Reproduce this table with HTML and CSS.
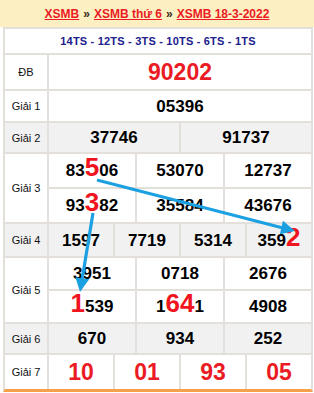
FILE: index.html
```html
<!DOCTYPE html>
<html lang="vi">
<head>
<meta charset="utf-8">
<title>XSMB 18-3-2022</title>
<link rel="stylesheet" href="styles.css">
</head>
<body>
<div class="page">
  <div class="head">
    <a href="#">XSMB</a> <span class="sep">»</span> <a href="#">XSMB thứ 6</a> <span class="sep">»</span> <a href="#">XSMB 18-3-2022</a>
  </div>
  <div class="box">
    <div class="row ts">14TS - 12TS - 3TS - 10TS - 6TS - 1TS</div>
    <div class="row h-db">
      <div class="lbl">ĐB</div>
      <div class="cells"><div class="line"><div class="c db"><span>90202</span></div></div></div>
    </div>
    <div class="row h-g1">
      <div class="lbl">Giải 1</div>
      <div class="cells"><div class="line"><div class="c"><span>05396</span></div></div></div>
    </div>
    <div class="row h-g2 gray">
      <div class="lbl">Giải 2</div>
      <div class="cells"><div class="line"><div class="c"><span>37746</span></div><div class="c"><span>91737</span></div></div></div>
    </div>
    <div class="row h-g3">
      <div class="lbl">Giải 3</div>
      <div class="cells">
        <div class="line"><div class="c"><span>83<b class="hl">5</b>06</span></div><div class="c"><span>53070</span></div><div class="c"><span>12737</span></div></div>
        <div class="line"><div class="c"><span>93<b class="hl">3</b>82</span></div><div class="c"><span>35584</span></div><div class="c"><span>43676</span></div></div>
      </div>
    </div>
    <div class="row h-g4 gray">
      <div class="lbl">Giải 4</div>
      <div class="cells"><div class="line"><div class="c"><span>1597</span></div><div class="c"><span>7719</span></div><div class="c"><span>5314</span></div><div class="c"><span>359<b class="hl">2</b></span></div></div></div>
    </div>
    <div class="row h-g5">
      <div class="lbl">Giải 5</div>
      <div class="cells">
        <div class="line"><div class="c"><span>3951</span></div><div class="c"><span>0718</span></div><div class="c"><span>2676</span></div></div>
        <div class="line"><div class="c"><span><b class="hl">1</b>539</span></div><div class="c"><span>1<b class="hl">64</b>1</span></div><div class="c"><span>4908</span></div></div>
      </div>
    </div>
    <div class="row h-g6 gray">
      <div class="lbl">Giải 6</div>
      <div class="cells"><div class="line"><div class="c"><span>670</span></div><div class="c"><span>934</span></div><div class="c"><span>252</span></div></div></div>
    </div>
    <div class="row h-g7">
      <div class="lbl">Giải 7</div>
      <div class="cells"><div class="line"><div class="c g7"><span>10</span></div><div class="c g7"><span>01</span></div><div class="c g7"><span>93</span></div><div class="c g7"><span>05</span></div></div></div>
    </div>
  </div>
  <svg class="arrows" width="314" height="393" viewBox="0 0 314 393" aria-hidden="true">
    <line x1="97" y1="180" x2="283" y2="228" stroke="#1ba0e2" stroke-width="3.2"/>
    <polygon points="295,231 279.9,234.3 282.9,220.7" fill="#1ba0e2"/>
    <line x1="93" y1="213" x2="82" y2="280" stroke="#1ba0e2" stroke-width="3.2"/>
    <polygon points="80,292 75.4,277.2 89.2,279.2" fill="#1ba0e2"/>
  </svg>
</div>
</body>
</html>
```
FILE: styles.css
```css
html, body {
  margin: 0;
  padding: 0;
  background: #ffffff;
}
body {
  font-family: "Liberation Sans", Arial, sans-serif;
  color: #111;
}
.page {
  position: relative;
  width: 314px;
  height: 393px;
  overflow: hidden;
}
.head {
  height: 27px;
  background: #fcf0c2;
  display: flex;
  align-items: center;
  justify-content: center;
  gap: 4px;
  font-size: 12px;
  font-weight: bold;
}
.head a {
  color: #ea1b24;
  text-decoration: underline;
}
.head .sep {
  color: #3a2a1a;
}
.box {
  margin: 0 1px 0 3px;
  border-left: 2px solid #e3dfda;
  border-right: 2px solid #e3dfda;
  border-bottom: 3px solid #f6a04a;
}
.row {
  display: flex;
  box-sizing: border-box;
  border-top: 2px solid #e3dfda;
}
.ts {
  height: 26px;
  align-items: center;
  justify-content: center;
  font-size: 11px;
  font-weight: bold;
  color: #20208c;
  letter-spacing: 0.2px;
}
.gray {
  background: #f1f1f1;
}
.h-db { height: 36px; }
.h-g1 { height: 32px; }
.h-g2 { height: 31px; }
.h-g3 { height: 70px; }
.h-g4 { height: 34px; }
.h-g5 { height: 66px; }
.h-g6 { height: 31px; }
.h-g7 { height: 36px; }
.lbl {
  width: 42px;
  flex: none;
  border-right: 2px solid #e3dfda;
  display: flex;
  align-items: center;
  justify-content: center;
  font-size: 11px;
  color: #111;
}
.cells {
  flex: 1;
  display: flex;
  flex-direction: column;
}
.line {
  flex: 1;
  display: flex;
}
.line + .line {
  border-top: 2px solid #e3dfda;
}
.c {
  flex: 1 1 0;
  display: flex;
  align-items: center;
  justify-content: center;
  font-size: 17px;
  font-weight: bold;
  color: #000;
  line-height: 17px;
}
.c + .c {
  border-left: 2px solid #e3dfda;
}
.c span {
  display: block;
}
.db {
  font-size: 23px;
  line-height: 23px;
  color: #ea1b24;
}
.hl {
  font-size: 26px;
  line-height: 0;
  color: #f0141e;
}
.g7 {
  font-size: 23px;
  line-height: 23px;
  color: #ea1b24;
}
.arrows {
  position: absolute;
  left: 0;
  top: 0;
  pointer-events: none;
}
```
